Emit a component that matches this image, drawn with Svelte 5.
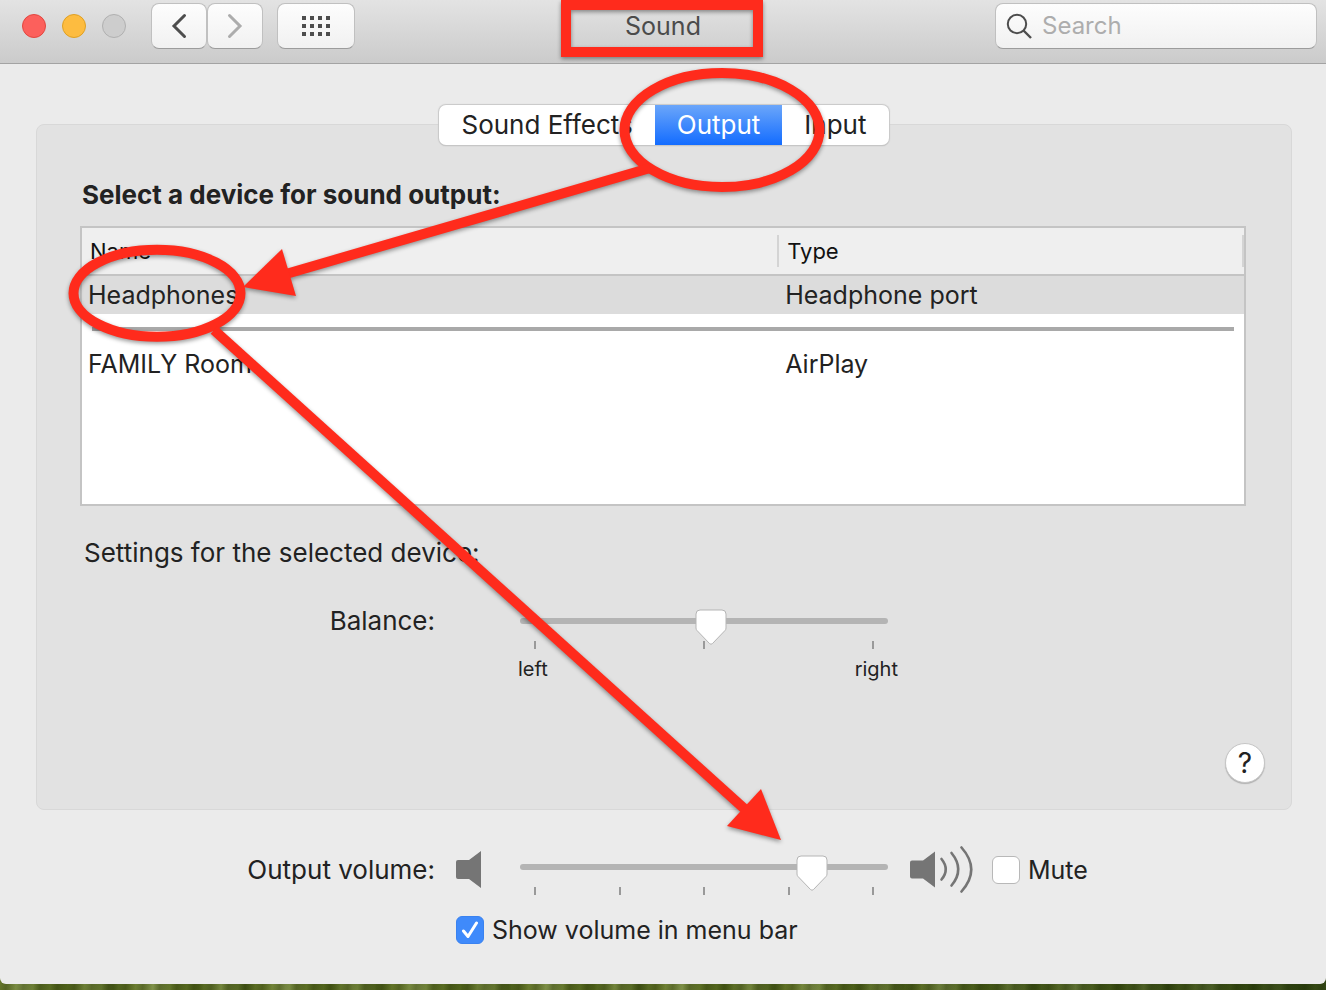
<script lang="ts">
let tabs = ['Sound Effects', 'Output', 'Input'];
let activeTab = 'Output';

let devices = [
    { id: 1, name: 'Headphones', type: 'Headphone port' },
    { id: 2, name: 'FAMILY Room', type: 'AirPlay' },
];
let selected = 1;

let search = '';
let balance = 52;
let volume = 82;
let mute = false;
let showInMenuBar = true;
</script>

<div class="window">
    <header class="toolbar">
        <div class="left">
            <div class="lights">
                <button class="light close" aria-label="Close"></button>
                <button class="light minimize" aria-label="Minimize"></button>
                <button class="light zoom" aria-label="Zoom" disabled></button>
            </div>
            <div class="nav">
                <button class="tool" aria-label="Back">
                    <svg width="16" height="26" viewBox="0 0 16 26"><path d="M13.5 2.5 L3 13 L13.5 23.5" fill="none" stroke="#4d4d4d" stroke-width="3" stroke-linecap="round" /></svg>
                </button>
                <button class="tool" aria-label="Forward">
                    <svg width="16" height="26" viewBox="0 0 16 26"><path d="M2.5 2.5 L13 13 L2.5 23.5" fill="none" stroke="#acacac" stroke-width="3" stroke-linecap="round" /></svg>
                </button>
            </div>
            <button class="tool all" aria-label="Show All">
                <svg width="28" height="20" viewBox="0 0 28 20" fill="#4d4d4d">
                    {#each [0, 8, 16] as y}
                        {#each [0, 8, 16, 24] as x}
                            <rect {x} {y} width="4" height="4" />
                        {/each}
                    {/each}
                </svg>
            </button>
        </div>
        <h1>Sound</h1>
        <label class="search">
            <svg width="26" height="26" viewBox="0 0 26 26" fill="none" stroke="#4d4d4d" stroke-width="2">
                <circle cx="11" cy="11" r="9.2" />
                <path d="M17.5 17.5 L25 25" stroke-width="2.4" />
            </svg>
            <input type="text" placeholder="Search" aria-label="Search" bind:value={search} />
        </label>
    </header>

    <main>
        <div class="tabs">
            {#each tabs as tab}
                <button class:active={tab === activeTab} on:click={() => activeTab = tab}>{tab}</button>
            {/each}
        </div>

        <section class="panel">
            <h2>Select a device for sound output:</h2>
            <div class="devices">
                <table>
                    <thead>
                        <tr><th><span>Name</span></th><th><span>Type</span></th></tr>
                    </thead>
                    <tbody>
                        {#each devices as device, i (device.id)}
                            {#if i > 0}
                                <tr class="divider"><td colspan="2"><hr /></td></tr>
                            {/if}
                            <tr class:selected={device.id === selected} on:click={() => selected = device.id}>
                                <td>{device.name}</td>
                                <td>{device.type}</td>
                            </tr>
                        {/each}
                    </tbody>
                </table>
            </div>
            <p>Settings for the selected device:</p>
            <div class="balance">
                <label for="balance">Balance:</label>
                <div class="slider">
                    <input id="balance" type="range" min="0" max="100" bind:value={balance} />
                    <div class="ticks"><i></i><i></i><i></i></div>
                    <div class="ends"><span>left</span><span>right</span></div>
                </div>
            </div>
            <div class="help"><button aria-label="Help">?</button></div>
        </section>

        <div class="volume">
            <label for="volume">Output volume:</label>
            <svg width="26" height="38" viewBox="0 0 26 38" fill="#757575">
                <path d="M2 9 H13 L25 0 V37 L13 28 H2 Q0 28 0 26 V11 Q0 9 2 9 Z" />
            </svg>
            <div class="slider">
                <input id="volume" type="range" min="0" max="100" bind:value={volume} />
                <div class="ticks"><i></i><i></i><i></i><i></i><i></i></div>
            </div>
            <svg width="64" height="48" viewBox="0 0 64 48" fill="none" stroke="#757575" stroke-width="2.6" stroke-linecap="round">
                <path d="M2 14.500 H13 L25 5.500 V41.500 L13 32.500 H2 Q0 32.500 0 30.500 V16.500 Q0 14.500 2 14.500 Z" fill="#757575" stroke="none" />
                <path d="M31.500 13 Q40 23.500 31.500 33.500" />
                <path d="M41.500 7 Q55 23.500 41.500 39.500" />
                <path d="M51.500 1.500 Q71 23.500 51.500 45.500" />
            </svg>
            <label class="check"><input type="checkbox" bind:checked={mute} />Mute</label>
            <label class="check menu-bar"><input type="checkbox" bind:checked={showInMenuBar} />Show volume in menu bar</label>
        </div>
    </main>
</div>

<svg class="marks" width="1326" height="990" viewBox="0 0 1326 990" fill="none" stroke="#ff2b1c" stroke-width="10">
    <rect x="566" y="5" width="192" height="47" />
    <ellipse cx="722" cy="130" rx="97.5" ry="57" />
    <ellipse cx="157" cy="293.3" rx="83.5" ry="43.5" />
    <path d="M650 168 L286 274" />
    <path d="M243 287 L282 249 L296 296 Z" fill="#ff2b1c" stroke="none" />
    <path d="M214 330 L748 812" />
    <path d="M781 840 L761 789 L727 826 Z" fill="#ff2b1c" stroke="none" />
</svg>

<style>
:global(body) {
    background:
        linear-gradient(90deg, transparent 60%, rgba(20, 40, 5, 0.6)),
        repeating-linear-gradient(96deg, transparent 0px, rgba(30, 40, 0, 0.3) 7px, transparent 17px),
        repeating-linear-gradient(84deg, #66782b 0px, #80924a 22px, #5d7026 41px, #4d6019 67px, #74863d 89px, #485b19 113px, #66782b 131px);
    font-family: Inter, "Liberation Sans", sans-serif;
    font-size: 26px;
    line-height: 32px;
    color: #222;
}

button, input {
    font: inherit;
    color: inherit;
    margin: 0;
    padding: 0;
    border: none;
    box-sizing: border-box;
}

.window {
    background: #ebebeb;
    border-radius: 0 0 6px 6px;
    margin-bottom: 6px;
}

.toolbar {
    display: grid;
    grid-template-columns: 1fr auto 1fr;
    align-items: center;
    box-sizing: border-box;
    height: 64px;
    padding: 3px 9px 14px;
    background: linear-gradient(#e3e3e3, #cbcbcb);
    border-bottom: 1px solid #a3a3a3;
}

.left, .lights, .nav {
    display: flex;
    align-items: center;
}

.left {
    padding-left: 13px;
}

.lights {
    gap: 16px;
    margin-right: 25px;
}

.light {
    width: 24px;
    height: 24px;
    border-radius: 50%;
    border: 1px solid #b0b0b0;
    background: #cdcdcd;
}

.light.close {
    background: #fc605c;
    border-color: #e2463f;
}

.light.minimize {
    background: #fdbc40;
    border-color: #dfa023;
}

.tool, .search {
    display: flex;
    align-items: center;
    justify-content: center;
    box-sizing: border-box;
    height: 46px;
    background: linear-gradient(#fdfdfd, #f1f1f1);
    border: 1px solid #c0c0c0;
    border-bottom-color: #9c9c9c;
    border-radius: 8px;
}

.tool {
    width: 56px;
}

.tool.all {
    width: 78px;
    margin-left: 14px;
}

h1 {
    margin: 0;
    font-size: 25px;
    font-weight: 400;
    color: #4b4b4b;
}

.search {
    justify-self: end;
    width: 322px;
    padding: 0 10px;
    gap: 10px;
    font-size: 24px;
}

.search input {
    flex: 1;
    min-width: 0;
    background: none;
    outline: none;
}

.search input::placeholder {
    color: #adadad;
}

main {
    padding: 41px 34px 38px 36px;
}

.tabs {
    position: relative;
    z-index: 1;
    display: flex;
    width: fit-content;
    margin: 0 auto -21px;
    background: white;
    border-radius: 7px;
    box-shadow: 0 0 1px 1px #c8c8c8, 0 1px 1px #b4b4b4;
}

.tabs button {
    height: 40px;
    padding: 0 22px;
    background: none;
}

.tabs button.active {
    color: white;
    background: linear-gradient(#6ba6fa, #136cff);
}

.panel {
    padding: 54px 45px 26px 43px;
    background: #e2e2e2;
    border: 1px solid #d8d8d8;
    border-radius: 8px;
}

h2 {
    margin: 0 2px 15px;
    font-size: 26px;
    font-weight: 700;
}

.devices {
    box-sizing: border-box;
    height: 280px;
    background: white;
    border: 2px solid #c4c4c4;
    font-size: 25px;
}

table {
    width: 100%;
    table-layout: fixed;
    border-collapse: collapse;
}

th, td {
    padding: 0 0 0 6px;
    text-align: left;
    font-weight: 400;
}

th:first-child {
    width: 60%;
}

thead tr {
    height: 47px;
    background: #efefef;
    border-bottom: 2px solid #c4c4c4;
}

th {
    padding: 0;
    font-size: 22px;
    color: #111;
}

th span {
    display: block;
    padding-left: 8px;
    border-right: 2px solid #d4d4d4;
}

tbody tr {
    height: 39px;
}

tbody tr.selected {
    background: #dcdcdc;
}

tbody tr.divider {
    height: 30px;
}

.divider td {
    padding: 0 10px;
}

hr {
    height: 4px;
    margin: 0;
    border: none;
    background: #a9a9a9;
}

p {
    margin: 31px 4px 36px;
}

.balance {
    display: grid;
    grid-template-columns: 355px 368px;
    column-gap: 85px;
}

.balance > label, .volume > label:first-child {
    text-align: right;
}

.slider {
    padding-top: 13px;
}

.slider input {
    position: relative;
    display: block;
    width: 100%;
    height: 6px;
    appearance: none;
    background: #b4b4b4;
    border-radius: 3px;
}

.slider input::-webkit-slider-thumb {
    appearance: none;
    width: 32px;
    height: 37px;
    margin-top: 13px;
    background: url("data:image/svg+xml,%3Csvg xmlns='http://www.w3.org/2000/svg' viewBox='0 0 32 37'%3E%3Cpath d='M5 1H27Q31 1 31 5V19Q31 20.500 30 21.500L17.500 34.500Q16 36 14.500 34.500L2 21.500Q1 20.500 1 19V5Q1 1 5 1Z' fill='white' stroke='%23b5b5b5'/%3E%3C/svg%3E") no-repeat;
}

.ticks {
    display: flex;
    justify-content: space-between;
    margin-top: 17px;
    padding: 0 14px;
}

.ticks i {
    width: 2px;
    height: 8px;
    background: #999;
}

.ends {
    display: flex;
    justify-content: space-between;
    margin: 8px -10px 0 -2px;
    font-size: 20px;
    line-height: 24px;
}

.help {
    display: flex;
    justify-content: flex-end;
    margin: 62px -19px 0 0;
}

.help button {
    width: 40px;
    height: 40px;
    border-radius: 50%;
    background: white;
    border: 1px solid #c6c6c6;
    box-shadow: 0 1px 1px #b0b0b0;
    font-size: 28px;
}

.volume {
    display: grid;
    grid-template-columns: 399px 26px 368px 64px auto;
    grid-template-rows: 48px 32px;
    align-items: center;
    margin-top: 36px;
    row-gap: 20px;
}

.volume > svg:nth-of-type(1) {
    margin-left: 21px;
}

.volume .slider {
    align-self: start;
    margin-left: 59px;
    margin-right: -59px;
    padding-top: 18px;
}

.volume > svg:nth-of-type(2) {
    margin-left: 81px;
}

.check {
    display: flex;
    align-items: center;
    gap: 8px;
    margin-left: 99px;
    font-size: 25px;
}

.check input {
    appearance: none;
    display: grid;
    place-items: center;
    width: 28px;
    height: 28px;
    background: white;
    border: 1px solid #b8b8b8;
    border-radius: 6px;
}

.check input:checked {
    background: #3f8afb;
    border-color: #3a82f0;
}

.check input:checked::after {
    content: "";
    width: 18px;
    height: 18px;
    background: url("data:image/svg+xml,%3Csvg xmlns='http://www.w3.org/2000/svg' viewBox='0 0 18 18'%3E%3Cpath d='M2.500 10L7 15.500L15.500 2' fill='none' stroke='white' stroke-width='3' stroke-linecap='round' stroke-linejoin='round'/%3E%3C/svg%3E");
}

.menu-bar {
    grid-row: 2;
    grid-column: 2 / -1;
    margin-left: 21px;
}

/* hand-drawn callouts over the window */
.marks {
    position: absolute;
    z-index: 2;
    top: 0;
    left: calc(50% - 663px);
    pointer-events: none;
    filter: drop-shadow(0 2px 2px rgba(0, 0, 0, 0.4));
}
</style>
